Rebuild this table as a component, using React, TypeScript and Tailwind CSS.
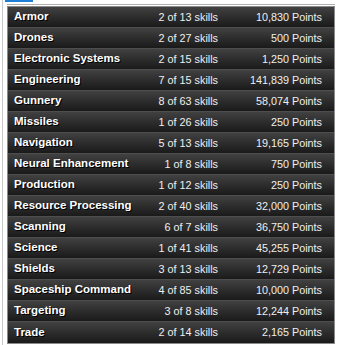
import * as React from "react";

type Skill = { name: string; skills: string; points: string };

const rows: Skill[] = [
  { name: "Armor", skills: "2 of 13 skills", points: "10,830 Points" },
  { name: "Drones", skills: "2 of 27 skills", points: "500 Points" },
  { name: "Electronic Systems", skills: "2 of 15 skills", points: "1,250 Points" },
  { name: "Engineering", skills: "7 of 15 skills", points: "141,839 Points" },
  { name: "Gunnery", skills: "8 of 63 skills", points: "58,074 Points" },
  { name: "Missiles", skills: "1 of 26 skills", points: "250 Points" },
  { name: "Navigation", skills: "5 of 13 skills", points: "19,165 Points" },
  { name: "Neural Enhancement", skills: "1 of 8 skills", points: "750 Points" },
  { name: "Production", skills: "1 of 12 skills", points: "250 Points" },
  { name: "Resource Processing", skills: "2 of 40 skills", points: "32,000 Points" },
  { name: "Scanning", skills: "6 of 7 skills", points: "36,750 Points" },
  { name: "Science", skills: "1 of 41 skills", points: "45,255 Points" },
  { name: "Shields", skills: "3 of 13 skills", points: "12,729 Points" },
  { name: "Spaceship Command", skills: "4 of 85 skills", points: "10,000 Points" },
  { name: "Targeting", skills: "3 of 8 skills", points: "12,244 Points" },
  { name: "Trade", skills: "2 of 14 skills", points: "2,165 Points" },
];

export default function App() {
  return (
    <div className="relative w-[337px] h-[345px] bg-white overflow-hidden font-['Liberation_Sans',Arial,sans-serif]">
      {/* left rule + blue tab marker */}
      <div className="absolute left-[2px] top-0 w-[1px] h-full bg-[#c9c9c9]" />
      <div className="absolute left-[5px] top-0 w-[28px] h-[2px] bg-[#1f7fd6]" />

      <div className="ml-[7px] pt-[4px] w-[328px]">
        <div className="border-t border-[#b0b0b0] pt-[1px]">
          <div className="border border-[#8a8a8a] bg-[#1c1c1c]">
            {rows.map((r) => (
              <div
                key={r.name}
                className="flex items-center h-[21px] border-b border-[#4e4e4e] last:border-b-0 bg-gradient-to-b from-[#414141] to-[#1a1a1a]"
              >
                <div className="w-[142px] pl-[6px] text-[11.5px] font-bold text-white whitespace-nowrap [text-shadow:1px_1px_0_#000]">
                  {r.name}
                </div>
                <div className="w-[68px] text-right text-[10.8px] text-[#efefef] whitespace-nowrap">
                  {r.skills}
                </div>
                <div className="w-[104px] text-right text-[10.8px] text-[#efefef] whitespace-nowrap">
                  {r.points}
                </div>
              </div>
            ))}
          </div>
        </div>
      </div>
    </div>
  );
}
